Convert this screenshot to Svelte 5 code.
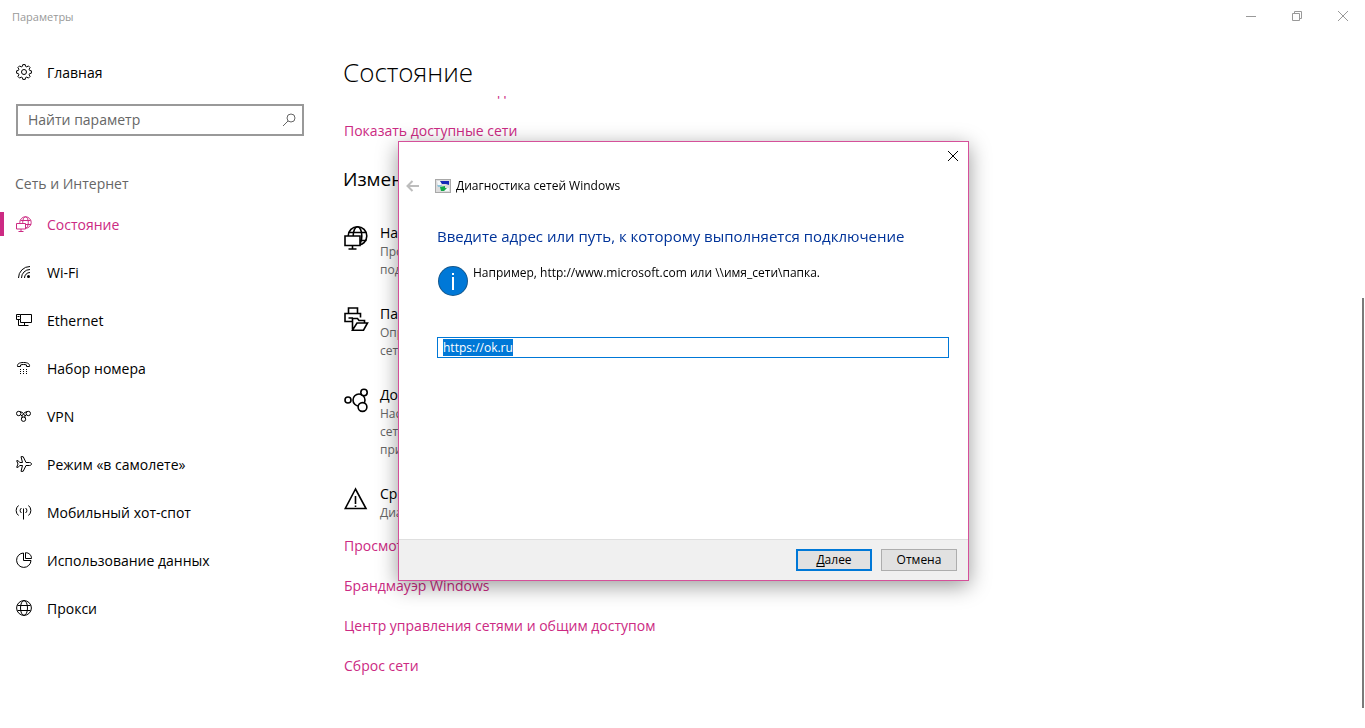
<script lang="ts">
  import { onMount } from 'svelte'

  type NavItem = { id: string; label: string }
  type Option = { icon: string; title: string; text: string }

  const navItems: NavItem[] = [
    { id: 'status', label: 'Состояние' },
    { id: 'wifi', label: 'Wi-Fi' },
    { id: 'ethernet', label: 'Ethernet' },
    { id: 'dialup', label: 'Набор номера' },
    { id: 'vpn', label: 'VPN' },
    { id: 'airplane', label: 'Режим «в самолете»' },
    { id: 'hotspot', label: 'Мобильный хот-спот' },
    { id: 'usage', label: 'Использование данных' },
    { id: 'proxy', label: 'Прокси' },
  ]

  const topLinks = ['Изменить свойства подключения', 'Показать доступные сети']

  const options: Option[] = [
    {
      icon: 'adapter',
      title: 'Настройка параметров адаптера',
      text: 'Просмотр сетевых адаптеров и изменение параметров\nподключения.',
    },
    {
      icon: 'sharing',
      title: 'Параметры общего доступа',
      text: 'Определите, что вы хотите предоставлять в доступ в\nсетях.',
    },
    {
      icon: 'homegroup',
      title: 'Домашняя группа',
      text: 'Настройте домашнюю группу для обмена файлами в\nсети и\nпринтерами.',
    },
    {
      icon: 'trouble',
      title: 'Средство устранения неполадок',
      text: 'Диагностика и устранение проблем с сетью.',
    },
  ]

  const bottomLinks = [
    'Просмотр свойств сети',
    'Брандмауэр Windows',
    'Центр управления сетями и общим доступом',
    'Сброс сети',
  ]

  let active = 'status'
  let search = ''
  let address = 'https://ok.ru'
  let showDialog = true
  let addressInput: HTMLInputElement

  onMount(() => {
    addressInput.focus()
    addressInput.select()
  })

  function closeDialog(): void {
    showDialog = false
  }
</script>

<div class="window">
  <header class="titlebar">
    <span class="caption">Параметры</span>
    <div class="window-buttons">
      <button aria-label="Свернуть">
        <svg width="12" height="12" viewBox="0 0 12 12"><path d="M2 6.5h10" /></svg>
      </button>
      <button aria-label="Восстановить">
        <svg width="12" height="12" viewBox="0 0 12 12">
          <path d="M2.5 3.5h7v7h-7zM4.500 3.500v-2h7v7h-2" />
        </svg>
      </button>
      <button aria-label="Закрыть">
        <svg width="12" height="12" viewBox="0 0 12 12"><path d="M2 1l10 10M12 1l-10 10" /></svg>
      </button>
    </div>
  </header>

  <div class="layout">
    <aside class="sidebar">
      <a class="home" href="#home">
        <svg width="16" height="16" viewBox="0 0 16 16">
          <path
            d="M6.800.6h2.400l.4 1.800 1.200.5 1.600-1 1.700 1.700-1 1.600.5 1.200 1.800.4v2.400l-1.800.4-.5 1.200 1 1.600-1.700 1.700-1.600-1-1.200.5-.4 1.800H6.800l-.4-1.800-1.200-.5-1.600 1-1.700-1.700 1-1.600-.5-1.200-1.800-.4V6.800l1.800-.4.5-1.200-1-1.600 1.700-1.700 1.600 1 1.200-.5z"
          />
          <circle cx="8" cy="8" r="2.500" />
        </svg>
        <span>Главная</span>
      </a>

      <label class="search">
        <input type="text" bind:value={search} placeholder="Найти параметр" aria-label="Найти параметр" />
        <svg width="14" height="14" viewBox="0 0 14 14">
          <circle cx="9" cy="5" r="4" />
          <path d="M6 8l-5 5" />
        </svg>
      </label>

      <h3>Сеть и Интернет</h3>

      <nav>
        {#each navItems as item}
          <a
            href="#{item.id}"
            class:active={active === item.id}
            on:click={() => (active = item.id)}
          >
            <svg width="16" height="16" viewBox="0 0 16 16">
              {#if item.id === 'status'}
                <circle cx="9.5" cy="6.5" r="5.700" />
                <ellipse cx="9.500" cy="6.500" rx="2.800" ry="5.700" />
                <path d="M4.500 4.500h10M9 8.500h6" />
                <path class="filled" d="M.5 7.500h9v5.500h-9z" />
                <path d="M5 13v2.500M2.500 15.500h5" />
              {:else if item.id === 'wifi'}
                <path d="M2.500 14A11.500 11.500 0 0 1 14 2.500M5.500 14A8.500 8.500 0 0 1 14 5.500M8.500 14A5.500 5.500 0 0 1 14 8.500" />
                <circle class="solid" cx="12.500" cy="12.500" r="1.500" />
              {:else if item.id === 'ethernet'}
                <path d="M4.500 2.500h11v8h-11V7.500M.5 2.500h4v5h-4zM1.500 4.500h2M2.500 7.500v6h10M8.500 10.500v3" />
              {:else if item.id === 'dialup'}
                <path d="M1.500 6.500c-.5-2.500 1.500-4 6-4s6.500 1.500 6 4h-3V5c-2-.7-4-.7-6 0v1.500z" />
                <path class="dots" d="M4 9.500h8M4 11.500h8M4 13.500h8" />
              {:else if item.id === 'vpn'}
                <circle cx="2.700" cy="5.500" r="2.200" />
                <circle cx="12.300" cy="5.500" r="2.200" />
                <circle cx="7.500" cy="11.200" r="2.200" />
                <path d="M4 3.700c3 .3 4.700 2.800 5.200 6M11 3.700c-3 .3-4.700 2.800-5.200 6M4.500 6.500l1.500 1.500M10.500 6.500L9 8" />
              {:else if item.id === 'airplane'}
                <path d="M15.500 8c0-.8-.8-1.500-2-1.500H10L7.200.7H5l1.500 5.800H3.700L2.200 4.700H.7L2 8 .7 11.300h1.500l1.500-1.800h2.800L5 15.300h2.200L10 9.500h3.500c1.200 0 2-.7 2-1.500z" />
              {:else if item.id === 'hotspot'}
                <path d="M7.500 4.500v11M5.500 9a3 3 0 0 1 0-5M9.500 9a3 3 0 0 0 0-5M2.500 11.500a6.500 6.500 0 0 1 0-10M12.500 11.500a6.500 6.500 0 0 0 0-10" />
              {:else if item.id === 'usage'}
                <path d="M7.500 1A7.200 7.200 0 1 0 15 8.500H7.500zM9.500.7v5.800h6C15.500 3 13 .7 9.500.7z" />
              {:else}
                <circle cx="8" cy="8" r="7.400" />
                <ellipse cx="8" cy="8" rx="3.500" ry="7.400" />
                <path d="M1.500 5.500h13M1.500 10.500h13" />
              {/if}
            </svg>
            <span>{item.label}</span>
          </a>
        {/each}
      </nav>
    </aside>

    <main>
      <h1>Состояние</h1>
      <div class="scroller">
        <div class="content">
          {#each topLinks as link}
            <a class="link" href="#status">{link}</a>
          {/each}

          <h2>Изменение сетевых параметров</h2>

          <div class="options">
            {#each options as option}
              <button class="option">
                <svg width="24" height="24" viewBox="0 0 24 24">
                  {#if option.icon === 'adapter'}
                    <circle cx="13.500" cy="10" r="9.300" />
                    <ellipse cx="13.500" cy="10" rx="4.300" ry="9.300" />
                    <path d="M5 6.500h17M15 14.500h7.500" />
                    <path class="filled" d="M1 10h15v9.500H1z" />
                    <path d="M8.500 19.500V23M4.500 23h8" />
                  {:else if option.icon === 'sharing'}
                    <path d="M4.500 6.500V1h9v5.500M8.500 14.500H1v-8h15.500v4M4.500 11h4.500M8.500 22.500V11.500h5l1.500 2h5.500v2.500M8.500 23.200l4.500-7.200h10.500l-4 7.200z" />
                  {:else if option.icon === 'homegroup'}
                    <circle cx="4" cy="12" r="3" />
                    <circle cx="15" cy="12" r="6" />
                    <circle class="filled" cx="20" cy="4.500" r="3.200" />
                    <circle class="filled" cx="18.500" cy="19" r="4.400" />
                  {:else}
                    <path d="M11.500 2L1.300 21.500h20.700zM11.500 9v8M11.500 18.500v1.500" />
                  {/if}
                </svg>
                <span class="text">
                  <span class="title">{option.title}</span>
                  <span class="desc">{option.text}</span>
                </span>
              </button>
            {/each}
          </div>

          {#each bottomLinks as link}
            <a class="link" href="#status">{link}</a>
          {/each}
        </div>
      </div>
      <div class="track"><div class="thumb"></div></div>
    </main>
  </div>
</div>

{#if showDialog}
  <div class="dialog" role="dialog" aria-labelledby="wizard-title">
    <div class="dialog-top">
      <button class="close" aria-label="Закрыть" on:click={closeDialog}>
        <svg width="12" height="12" viewBox="0 0 12 12"><path d="M1 1l10 10M11 1l-10 10" /></svg>
      </button>
    </div>

    <div class="dialog-header">
      <button class="back" aria-label="Назад" disabled>
        <svg width="14" height="12" viewBox="0 0 14 12"><path d="M6.500 1L1.500 6l5 5M1.500 6H13" /></svg>
      </button>
      <svg class="logo" width="16" height="14" viewBox="0 0 16 14">
        <path d="M0 0h16v14H0z" fill="#a8a8a8" />
        <path d="M1 1h14v12H1z" fill="#dcdcdc" />
        <path d="M2 2h4v4H3z" fill="#f4f8fa" />
        <path d="M5 2h9v4l-3-1H7z" fill="#1528b8" />
        <path d="M2 6l5 0-1 2H3z" fill="#8fc4da" />
        <path d="M10 9h4v3h-5z" fill="#f4f8fa" />
        <path d="M5 8l5-1v2h2l-3 3H6z" fill="#12a648" />
      </svg>
      <span id="wizard-title">Диагностика сетей Windows</span>
    </div>

    <div class="dialog-body">
      <h4>Введите адрес или путь, к которому выполняется подключение</h4>
      <div class="hint">
        <svg width="30" height="30" viewBox="0 0 30 30">
          <circle cx="15" cy="15" r="15" fill="#14578c" />
          <circle cx="15" cy="15" r="14" fill="#0078d7" />
          <path d="M14 7h2v2h-2zM14 11h2v13h-2z" fill="#ffffff" />
        </svg>
        <label for="address">Например, http://www.microsoft.com или \\имя_сети\папка.</label>
      </div>
      <input id="address" type="text" bind:this={addressInput} bind:value={address} />
    </div>

    <div class="dialog-footer">
      <button class="primary"><u>Д</u>алее</button>
      <button on:click={closeDialog}>Отмена</button>
    </div>
  </div>
{/if}

<style>
  :global(body) {
    background: #ffffff;
    color: #000000;
    font-family: 'Open Sans', 'Noto Sans', sans-serif;
    font-size: 14px;
  }

  .window {
    min-height: 100vh;
    display: flex;
    flex-direction: column;
    box-sizing: border-box;
  }

  a {
    color: inherit;
    text-decoration: none;
  }

  button,
  input {
    font-family: inherit;
    font-size: inherit;
    color: inherit;
  }

  button {
    background: transparent;
    border: none;
    padding: 0;
  }

  svg {
    flex: none;
    fill: none;
    stroke: currentColor;
    overflow: visible;
  }

  .titlebar {
    display: flex;
    align-items: center;
    justify-content: space-between;
    height: 32px;
    padding-left: 12px;
    color: #999999;
    font-size: 11px;
  }

  .window-buttons {
    display: flex;
  }

  .window-buttons button {
    width: 46px;
    height: 32px;
    display: flex;
    align-items: center;
    justify-content: center;
  }

  .layout {
    flex: 1;
    display: flex;
  }

  .sidebar {
    width: 320px;
    flex: none;
    padding-top: 16px;
  }

  .home,
  nav a {
    display: flex;
    align-items: center;
    gap: 15px;
    height: 48px;
    padding-left: 16px;
  }

  .search {
    display: flex;
    align-items: center;
    height: 32px;
    margin: 8px 16px 32px;
    padding: 0 6px 0 10px;
    border: 2px solid #999999;
    box-sizing: border-box;
    color: #666666;
  }

  .search input {
    flex: 1;
    min-width: 0;
    padding: 0 0 2px;
    border: none;
    outline: none;
    background: transparent;
  }

  .search input::placeholder {
    color: #666666;
    opacity: 1;
  }

  h1,
  h2,
  h3,
  h4 {
    margin: 0;
    font-weight: 400;
  }

  h3 {
    padding-left: 15px;
    font-size: 14px;
    line-height: 32px;
    color: #666666;
  }

  nav a.active {
    color: #cc2a83;
    position: relative;
  }

  nav a.active::before {
    content: '';
    position: absolute;
    left: 0;
    top: 12px;
    width: 4px;
    height: 24px;
    background: #cc2a83;
  }

  .solid {
    fill: currentColor;
    stroke: none;
  }

  .filled {
    fill: #ffffff;
  }

  .dots {
    stroke-dasharray: 1 2;
  }

  main {
    flex: 1;
    min-width: 0;
    padding: 16px 23px 20px;
    position: relative;
  }

  h1 {
    font-size: 26px;
    font-weight: 300;
    line-height: 48px;
  }

  .scroller {
    overflow: hidden;
  }

  .content {
    margin-top: -25px;
  }

  .link {
    display: block;
    width: fit-content;
    line-height: 40px;
    padding-left: 1px;
    color: #cc2a83;
  }

  h2 {
    padding: 14px 0 30px;
    font-size: 19px;
    line-height: 28px;
  }

  .options {
    display: flex;
    flex-direction: column;
    gap: 25px;
    margin-bottom: 4px;
    padding-left: 1px;
  }

  .option {
    display: flex;
    align-items: flex-start;
    gap: 12px;
    text-align: left;
  }

  .option svg {
    margin-top: 3px;
    stroke-width: 1.6;
  }

  .text {
    display: flex;
    flex-direction: column;
  }

  .title {
    line-height: 20px;
  }

  .desc {
    font-size: 12px;
    line-height: 18px;
    color: #666666;
    white-space: pre-line;
  }

  .track {
    position: absolute;
    top: 64px;
    right: 1px;
    bottom: 20px;
    width: 2px;
    display: flex;
    align-items: flex-end;
  }

  .thumb {
    width: 2px;
    height: 67%;
    background: #7a7a7a;
  }

  .dialog {
    position: fixed;
    left: 398px;
    top: 141px;
    width: 571px;
    min-height: 440px;
    box-sizing: border-box;
    display: flex;
    flex-direction: column;
    background: #ffffff;
    border: 1px solid #d5509a;
    box-shadow: 0 5px 20px rgba(0, 0, 0, 0.4);
    font-size: 12px;
  }

  .dialog-top {
    display: flex;
    justify-content: flex-end;
    height: 28px;
  }

  .close {
    width: 30px;
    display: flex;
    align-items: center;
    justify-content: center;
  }

  .dialog-header {
    display: flex;
    align-items: center;
    height: 31px;
    padding-left: 7px;
  }

  .dialog-header span {
    margin-left: 5px;
  }

  .back {
    display: flex;
    margin-right: 15px;
    color: #bdbdbd;
  }

  .back svg {
    stroke-width: 2;
  }

  .logo {
    stroke: none;
  }

  .dialog-body {
    flex: 1;
    padding: 21px 19px 0 38px;
  }

  h4 {
    font-size: 15px;
    line-height: 28px;
    color: #003399;
  }

  .hint {
    display: flex;
    gap: 5px;
    margin-top: 16px;
    padding-left: 1px;
  }

  .hint svg {
    stroke: none;
  }

  .hint label {
    line-height: 14px;
  }

  #address {
    display: block;
    width: 100%;
    height: 21px;
    margin-top: 41px;
    padding: 0 5px;
    box-sizing: border-box;
    border: 1px solid #0078d7;
    outline: none;
  }

  #address::selection {
    background: #0078d7;
    color: #ffffff;
  }

  .dialog-footer {
    display: flex;
    justify-content: flex-end;
    gap: 9px;
    padding: 9px 11px;
    background: #f0f0f0;
    border-top: 1px solid #dfdfdf;
  }

  .dialog-footer button {
    width: 76px;
    height: 22px;
    padding-bottom: 2px;
    border: 1px solid #adadad;
    background: #e1e1e1;
  }

  .dialog-footer .primary {
    border: 2px solid #0078d7;
  }

  u {
    text-decoration-skip-ink: none;
    text-underline-offset: 2px;
  }
</style>
